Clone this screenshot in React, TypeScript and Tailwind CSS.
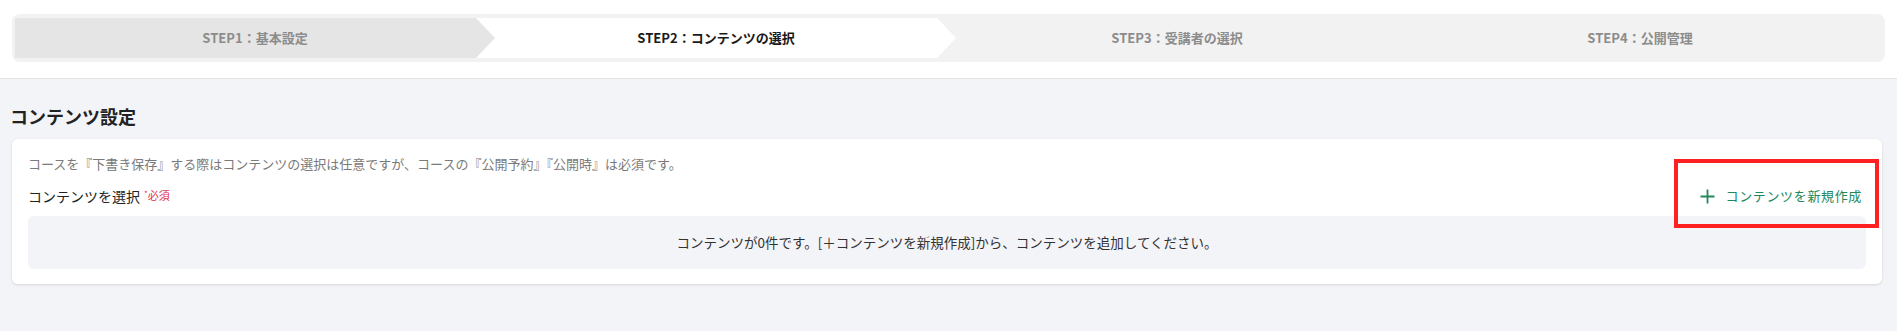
import React from 'react';

const font = { fontFamily: '"Noto Sans CJK JP", "Noto Sans", sans-serif' };

const steps = [
  { label: 'STEP1：基本設定', state: 'done' },
  { label: 'STEP2：コンテンツの選択', state: 'current' },
  { label: 'STEP3：受講者の選択', state: 'todo' },
  { label: 'STEP4：公開管理', state: 'todo' },
];

const arrow = '[clip-path:polygon(0_0,calc(100%-19px)_0,100%_50%,calc(100%-19px)_100%,0_100%)]';

const Stepper: React.FC = () => (
  <div className="flex rounded-lg bg-[#f2f2f2] px-[3px] py-1">
    {steps.map((s, i) => {
      const last = i === steps.length - 1;
      let cls = 'relative flex h-10 items-center justify-center text-[13px] font-bold ';
      if (s.state === 'done') cls += `z-30 w-[480px] -mr-[19px] bg-[#e5e5e5] text-[#8c8c8c] ${arrow}`;
      else if (s.state === 'current') cls += `z-20 w-[480px] -mr-[19px] bg-white text-[#1a1a1a] ${arrow}`;
      else cls += last ? 'flex-1 text-[#8c8c8c]' : 'z-10 w-[480px] -mr-[19px] text-[#8c8c8c]';
      return (
        <div key={s.label} className={cls}>
          {s.label}
        </div>
      );
    })}
  </div>
);

export default function App() {
  return (
    <div className="min-h-[331px] bg-[#f3f4f8]" style={font}>
      <header className="border-b border-[#e3e3e3] bg-white px-3 pt-[14px] pb-4">
        <Stepper />
      </header>

      <main className="pl-3 pr-[15px] pt-[25px]">
        <h2 className="-ml-[2px] mb-[11px] text-[18px] font-bold leading-6 text-[#222]">コンテンツ設定</h2>

        <section className="relative rounded-md bg-white px-4 pt-4 pb-[15px] shadow-[0_1px_3px_rgba(0,0,0,0.12)]">
          <p className="text-[13px] leading-[18px] text-[#7a7a7a]">
            コースを『下書き保存』する際はコンテンツの選択は任意ですが、コースの『公開予約』『公開時』は必須です。
          </p>

          <div className="mt-[14px] flex items-center justify-between">
            <div className="flex items-start text-[14px] leading-[18px] text-[#222]">
              コンテンツを選択
              <span className="ml-1 text-[11px] leading-[16px] text-[#e0344c]">
                <span className="relative -top-[3px] text-[8px]">*</span>必須
              </span>
            </div>

            <button className="mr-1 flex items-center gap-[10px] text-[13px] leading-[18px] tracking-[0.05em] text-[#22875a]">
              <svg width="15" height="15" viewBox="0 0 15 15" fill="none" stroke="currentColor" strokeWidth="1.8">
                <path d="M7.5 0.5v14M0.5 7.5h14" />
              </svg>
              コンテンツを新規作成
            </button>
          </div>

          <div className="mt-[11px] flex h-[53px] items-center justify-center rounded-md bg-[#f3f4f8] text-[13.5px] text-[#333]">
            コンテンツが0件です。[＋コンテンツを新規作成]から、コンテンツを追加してください。
          </div>

          <span className="pointer-events-none absolute top-5 right-[3px] h-[69px] w-[205px] border-4 border-[#ff2121]" />
        </section>
      </main>
    </div>
  );
}
